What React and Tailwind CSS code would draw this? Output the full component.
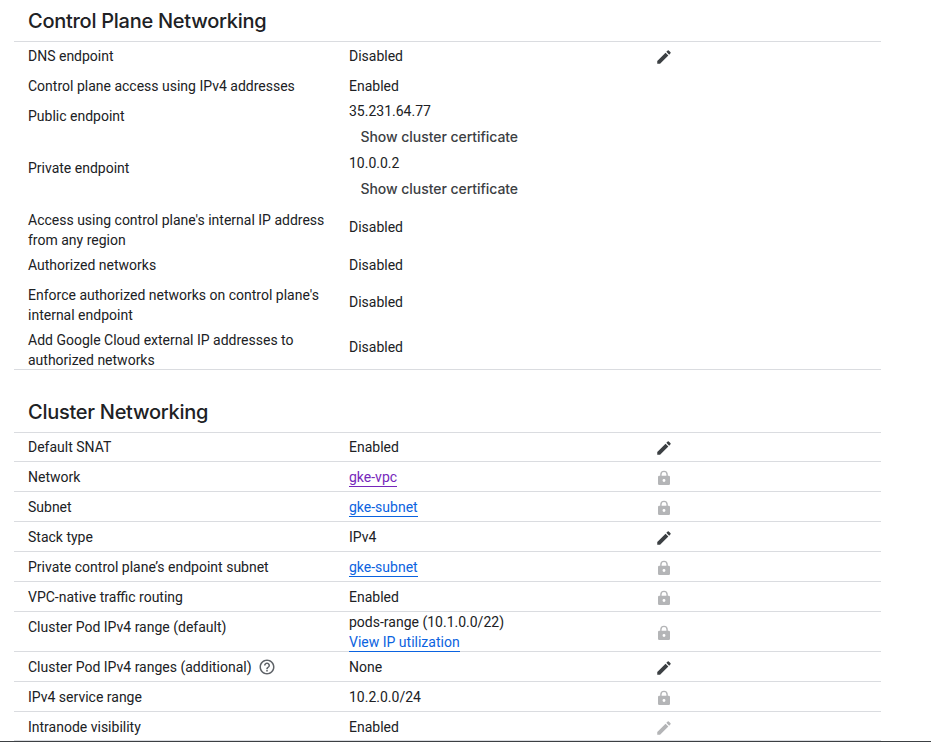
function Pencil({ muted }) {
  return (
    <svg viewBox="0 0 24 24" className={muted ? "block size-[18px] fill-[#b4b5b7]" : "block size-[18px] fill-[#3c4043]"}>
      <path d="M3 17.25V21h3.75L17.81 9.94l-3.75-3.75L3 17.25zM20.71 7.04c.39-.39.39-1.02 0-1.41l-2.34-2.34a.996.996 0 0 0-1.41 0l-1.83 1.83 3.75 3.75 1.83-1.83z" />
    </svg>
  );
}

function Lock() {
  return (
    <svg viewBox="0 0 18 18" className="block size-[18px]">
      <path d="M5.9 7.500V5.500a3.100 3.100 0 0 1 6.200 0v2" fill="none" stroke="#b4b5b7" strokeWidth="1.400" />
      <path
        fill="#b4b5b7"
        fillRule="evenodd"
        d="M4.300 6.800h9.400A1.300 1.300 0 0 1 15 8.100v6.700a1.300 1.300 0 0 1-1.300 1.300H4.300A1.300 1.300 0 0 1 3 14.800v-6.700a1.300 1.300 0 0 1 1.300-1.300zM9 10a1.450 1.450 0 1 0 0 2.900a1.450 1.450 0 0 0 0-2.900z"
      />
    </svg>
  );
}

function Help() {
  return (
    <svg viewBox="0 0 24 24" className="block size-[18px] fill-[#5f6368]">
      <path d="M11 18h2v-2h-2v2zm1-16C6.480 2 2 6.480 2 12s4.480 10 10 10 10-4.480 10-10S17.520 2 12 2zm0 18c-4.410 0-8-3.590-8-8s3.590-8 8-8 8 3.590 8 8-3.590 8-8 8zm0-14c-2.210 0-4 1.790-4 4h2c0-1.100.9-2 2-2s2 .9 2 2c0 2-3 1.750-3 5h2c0-2.250 3-2.500 3-5 0-2.210-1.790-4-4-4z" />
    </svg>
  );
}

function Link({ visited, children }) {
  return (
    <a
      className={
        visited
          ? "block h-5 w-fit border-b border-[#7627bb] text-[#7627bb]"
          : "block h-5 w-fit border-b border-[#0b63e0] text-[#0b63e0]"
      }
    >
      {children}
    </a>
  );
}

function Certificate({ address }) {
  return (
    <>
      <div>{address}</div>
      <button className="mt-1.5 ml-[11.5px] block h-5 font-['Inter'] text-[14px] font-medium leading-5 tracking-[-0.05px] text-[#3c4043]">
        Show cluster certificate
      </button>
    </>
  );
}

function Row({ label, value, icon, height = "h-[30px]", labelPad = "pt-[5px]", valuePad = "pt-[5px]", iconPad = "pt-[7px]", line = "" }) {
  return (
    <div className={`flex ${height} ${line}`}>
      <div className={`w-[321px] shrink-0 pl-3.5 pr-2 ${labelPad}`}>{label}</div>
      <div className={`w-[320px] shrink-0 pl-3.5 ${valuePad}`}>{value}</div>
      <div className={iconPad}>{icon}</div>
    </div>
  );
}

function Heading({ className, children }) {
  return (
    <h2 className={`border-b border-[#dadce0] pl-3.5 font-['Inter'] text-[20px] font-medium leading-6 tracking-[-0.27px] ${className}`}>
      {children}
    </h2>
  );
}

const LINE = "border-b border-[#dadce0]";

export default function App() {
  return (
    <div className="h-[742px] overflow-hidden border-b border-[#3c4043] bg-white font-['Roboto',sans-serif] text-sm leading-5 text-[#202124]">
      <main className="ml-3.5 w-[867px]">
        <section>
          <Heading className="h-[42px] pt-[9px]">Control Plane Networking</Heading>
          <Row height="h-[29px]" labelPad="pt-1" valuePad="pt-1" iconPad="pt-1.5" label="DNS endpoint" value="Disabled" icon={<Pencil />} />
          <Row label="Control plane access using IPv4 addresses" value="Enabled" />
          <Row height="h-[52px]" valuePad="pt-0" label="Public endpoint" value={<Certificate address="35.231.64.77" />} />
          <Row height="h-[52px]" valuePad="pt-0" label="Private endpoint" value={<Certificate address="10.0.0.2" />} />
          <Row height="h-[45px]" valuePad="pt-3" label="Access using control plane's internal IP address from any region" value="Disabled" />
          <Row label="Authorized networks" value="Disabled" />
          <Row height="h-[45px]" valuePad="pt-3" label="Enforce authorized networks on control plane's internal endpoint" value="Disabled" />
          <Row height="h-[45px]" valuePad="pt-3" line={LINE} label="Add Google Cloud external IP addresses to authorized networks" value="Disabled" />
        </section>
        <section>
          <Heading className="h-[63px] pt-[30px]">Cluster Networking</Heading>
          <Row line={LINE} height="h-[29px]" labelPad="pt-1" valuePad="pt-1" iconPad="pt-1.5" label="Default SNAT" value="Enabled" icon={<Pencil />} />
          <Row line={LINE} label="Network" value={<Link visited>gke-vpc</Link>} icon={<Lock />} />
          <Row line={LINE} label="Subnet" value={<Link>gke-subnet</Link>} icon={<Lock />} />
          <Row line={LINE} label="Stack type" value="IPv4" icon={<Pencil />} />
          <Row line={LINE} label="Private control plane’s endpoint subnet" value={<Link>gke-subnet</Link>} icon={<Lock />} />
          <Row line={LINE} label="VPC-native traffic routing" value="Enabled" icon={<Lock />} />
          <Row
            line={LINE}
            height="h-10"
            valuePad="pt-0"
            iconPad="pt-3"
            label="Cluster Pod IPv4 range (default)"
            value={
              <>
                <div>pods-range (10.1.0.0/22)</div>
                <Link>View IP utilization</Link>
              </>
            }
            icon={<Lock />}
          />
          <Row
            line={LINE}
            label={
              <div className="flex items-center gap-1.5">
                Cluster Pod IPv4 ranges (additional)
                <Help />
              </div>
            }
            value="None"
            icon={<Pencil />}
          />
          <Row line={LINE} label="IPv4 service range" value="10.2.0.0/24" icon={<Lock />} />
          <Row line={LINE} height="h-[29px]" label="Intranode visibility" value="Enabled" icon={<Pencil muted />} />
        </section>
      </main>
    </div>
  );
}
